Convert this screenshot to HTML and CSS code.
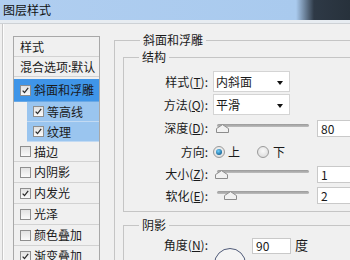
FILE: index.html
```html
<!DOCTYPE html>
<html lang="zh-CN">
<head>
<meta charset="utf-8">
<title>图层样式</title>
<link rel="stylesheet" href="styles.css">
</head>
<body>
<div class="titlebar"><span class="title">图层样式</span></div>
<div class="titlegap"></div>
<div class="frame">
  <div class="sidebar">
    <ul class="list">
      <li class="item head">样式</li>
      <li class="item head">混合选项:默认</li>
      <li class="item sel"><span class="cb"><svg viewBox="0 0 11 11" width="9" height="9"><path d="M2 5.6 L4.3 8 L8.8 2.4" fill="none" stroke="#2b2b2b" stroke-width="1.5"/></svg></span>斜面和浮雕</li>
      <li class="item sub"><span class="cb"><svg viewBox="0 0 11 11" width="9" height="9"><path d="M2 5.6 L4.3 8 L8.8 2.4" fill="none" stroke="#2b2b2b" stroke-width="1.5"/></svg></span>等高线</li>
      <li class="item sub"><span class="cb"><svg viewBox="0 0 11 11" width="9" height="9"><path d="M2 5.6 L4.3 8 L8.8 2.4" fill="none" stroke="#2b2b2b" stroke-width="1.5"/></svg></span>纹理</li>
      <li class="item short"><span class="cb"></span>描边</li>
      <li class="item"><span class="cb"></span>内阴影</li>
      <li class="item"><span class="cb"><svg viewBox="0 0 11 11" width="9" height="9"><path d="M2 5.6 L4.3 8 L8.8 2.4" fill="none" stroke="#2b2b2b" stroke-width="1.5"/></svg></span>内发光</li>
      <li class="item"><span class="cb"></span>光泽</li>
      <li class="item"><span class="cb"></span>颜色叠加</li>
      <li class="item"><span class="cb"><svg viewBox="0 0 11 11" width="9" height="9"><path d="M2 5.6 L4.3 8 L8.8 2.4" fill="none" stroke="#2b2b2b" stroke-width="1.5"/></svg></span>渐变叠加</li>
    </ul>
  </div>
  <div class="main">
    <fieldset class="group outer">
      <legend>斜面和浮雕</legend>
      <fieldset class="group inner">
        <legend>结构</legend>
        <div class="row r1">
          <span class="label">样式(<u>T</u>):</span>
          <span class="select">内斜面<span class="arrow"></span></span>
        </div>
        <div class="row r2">
          <span class="label">方法(<u>Q</u>):</span>
          <span class="select">平滑<span class="arrow"></span></span>
        </div>
        <div class="row r3">
          <span class="label">深度(<u>D</u>):</span>
          <span class="slider"><span class="track"></span><svg class="thumb" style="left:3px" viewBox="0 0 13 9" width="13" height="9"><path d="M0.5 8.5 V4.6 L6.5 0.6 L12.5 4.6 V8.5 Z" fill="#f2f2f2" stroke="#8c8c8c"/></svg></span>
          <span class="value">80</span>
        </div>
        <div class="row r4">
          <span class="label">方向:</span>
          <span class="radio on"></span><span class="rlabel">上</span>
          <span class="radio second"></span><span class="rlabel second">下</span>
        </div>
        <div class="row r5">
          <span class="label">大小(<u>Z</u>):</span>
          <span class="slider"><span class="track"></span><svg class="thumb" style="left:2px" viewBox="0 0 13 9" width="13" height="9"><path d="M0.5 8.5 V4.6 L6.5 0.6 L12.5 4.6 V8.5 Z" fill="#f2f2f2" stroke="#8c8c8c"/></svg></span>
          <span class="value">1</span>
        </div>
        <div class="row r6">
          <span class="label">软化(<u>E</u>):</span>
          <span class="slider"><span class="track"></span><svg class="thumb" style="left:11px" viewBox="0 0 13 9" width="13" height="9"><path d="M0.5 8.5 V4.6 L6.5 0.6 L12.5 4.6 V8.5 Z" fill="#f2f2f2" stroke="#8c8c8c"/></svg></span>
          <span class="value">2</span>
        </div>
      </fieldset>
      <fieldset class="group inner shade">
        <legend>阴影</legend>
        <div class="row angle">
          <span class="label">角度(<u>N</u>):</span>
          <span class="dial"></span>
          <span class="value small">90</span>
          <span class="unit">度</span>
        </div>
      </fieldset>
    </fieldset>
  </div>
</div>
</body>
</html>
```
FILE: styles.css
```css
* { box-sizing: border-box; }
html, body { margin: 0; padding: 0; }
body {
  width: 350px;
  height: 260px;
  overflow: hidden;
  background: #f0f0f0;
  font: 12px/14px "Noto Sans CJK SC", "Noto Sans", sans-serif;
  color: #1a1a1a;
}
u { text-decoration: underline; text-underline-offset: 1px; }

.titlebar {
  height: 20px;
  display: flex;
  align-items: center;
  padding-left: 3px;
  background: linear-gradient(90deg, #b0cef0 0, #a9caee 296px, #2e3946 314px, #27313b 100%);
  color: #111;
  font-size: 12px;
}
.titlegap {
  height: 4px;
  background: #e7ecf1;
  border-bottom: 1px solid #cdd1d5;
}
.frame {
  display: flex;
  align-items: flex-start;
  margin-left: 3px;
  border-left: 1px solid #fdfdfd;
  box-shadow: -1px 0 #c8c8c8;
  height: 236px;
}

.sidebar { padding: 12px 0 0 9px; }
.list {
  width: 87px;
  margin: 0;
  padding: 0;
  list-style: none;
  border: 1px solid #a8a8a8;
  border-bottom: none;
  background: #f0f0f0;
}
.item {
  height: 21px;
  display: flex;
  align-items: center;
  gap: 3px;
  padding-left: 6px;
  border-bottom: 1px solid #d2d2d2;
  white-space: nowrap;
}
.item.head { height: 20px; gap: 0; }
.item.short { height: 20px; }
.item.sel {
  margin-top: 2px;
  height: 23px;
  background: #3f95e8;
  border-bottom: 1px solid #6aa9e6;
}
.item.sub {
  height: 20px;
  margin-left: 13px;
  background: #9ac5ef;
  border-bottom: 1px solid #c2daf3;
}
.cb {
  width: 11px;
  height: 11px;
  flex: none;
  border: 1px solid #8e8e8e;
  background: linear-gradient(#e2e2e2, #fafafa);
  display: flex;
  align-items: center;
  justify-content: center;
}

.main { margin-left: 14px; padding-top: 9px; }
.group {
  margin: 0;
  padding: 0;
  min-width: 0;
  border: 1px solid #c5c5c5;
}
.group > legend { padding: 0 3px; line-height: 14px; }
.outer { width: 260px; height: 240px; padding: 3px 0 0 8px; }
.outer > legend { margin-left: 17px; }
.inner { width: 260px; padding: 7px 0 5px 0; }
.inner > legend { margin-left: 15px; }
.shade { margin-top: 6px; padding: 6px 0 0 0; height: 60px; }

.row { display: flex; align-items: center; }
.r1 { height: 21px; }
.r2 { height: 21px; margin-top: 2px; }
.r3 { height: 26px; }
.r4 { height: 22px; }
.r5 { height: 22px; }
.r6 { height: 21px; }
.label { width: 84px; text-align: right; flex: none; white-space: nowrap; }

.select {
  position: relative;
  margin-left: 5px;
  width: 77px;
  height: 21px;
  padding-left: 2px;
  display: flex;
  align-items: center;
  background: #fff;
  border: 1px solid #d4d4d4;
}
.arrow {
  position: absolute;
  right: 6px;
  top: 9px;
  border-left: 3.5px solid transparent;
  border-right: 3.5px solid transparent;
  border-top: 4px solid #111;
}

.slider {
  position: relative;
  margin-left: 5px;
  width: 98px;
  height: 9px;
  flex: none;
}
.track {
  display: block;
  margin: 0 2px 0 4px;
  height: 3px;
  border-radius: 2px;
  background: linear-gradient(#9a9a9a, #bdbdbd);
}
.thumb { position: absolute; top: 0; }
.value {
  margin-left: 6px;
  width: 40px;
  height: 17px;
  flex: none;
  padding-left: 3px;
  background: #fff;
  border: 1px solid #c9c9c9;
  line-height: 15px;
}

.radio {
  margin-left: 5px;
  width: 12px;
  height: 12px;
  flex: none;
  border-radius: 50%;
  border: 1px solid #9a9a9a;
  background: radial-gradient(circle at 50% 40%, #fafafa, #d6d6d6);
  display: flex;
  align-items: center;
  justify-content: center;
}
.radio.on::after {
  content: "";
  width: 6px;
  height: 6px;
  border-radius: 50%;
  background: radial-gradient(circle at 40% 35%, #6fd0ff, #1d6d9e 70%, #16506f);
}
.radio.second { margin-left: 17px; }
.rlabel { margin-left: 3px; }
.rlabel.second { margin-left: 4px; }

.angle { align-items: flex-start; }
.dial {
  margin: 10px 0 0 6px;
  width: 32px;
  height: 32px;
  flex: none;
  border-radius: 50%;
  border: 1.5px solid #4f5a78;
  background: #f4f4f4;
}
.value.small { width: 39px; height: 16px; line-height: 14px; }
.unit { margin-left: 4px; font-size: 13px; }
```
